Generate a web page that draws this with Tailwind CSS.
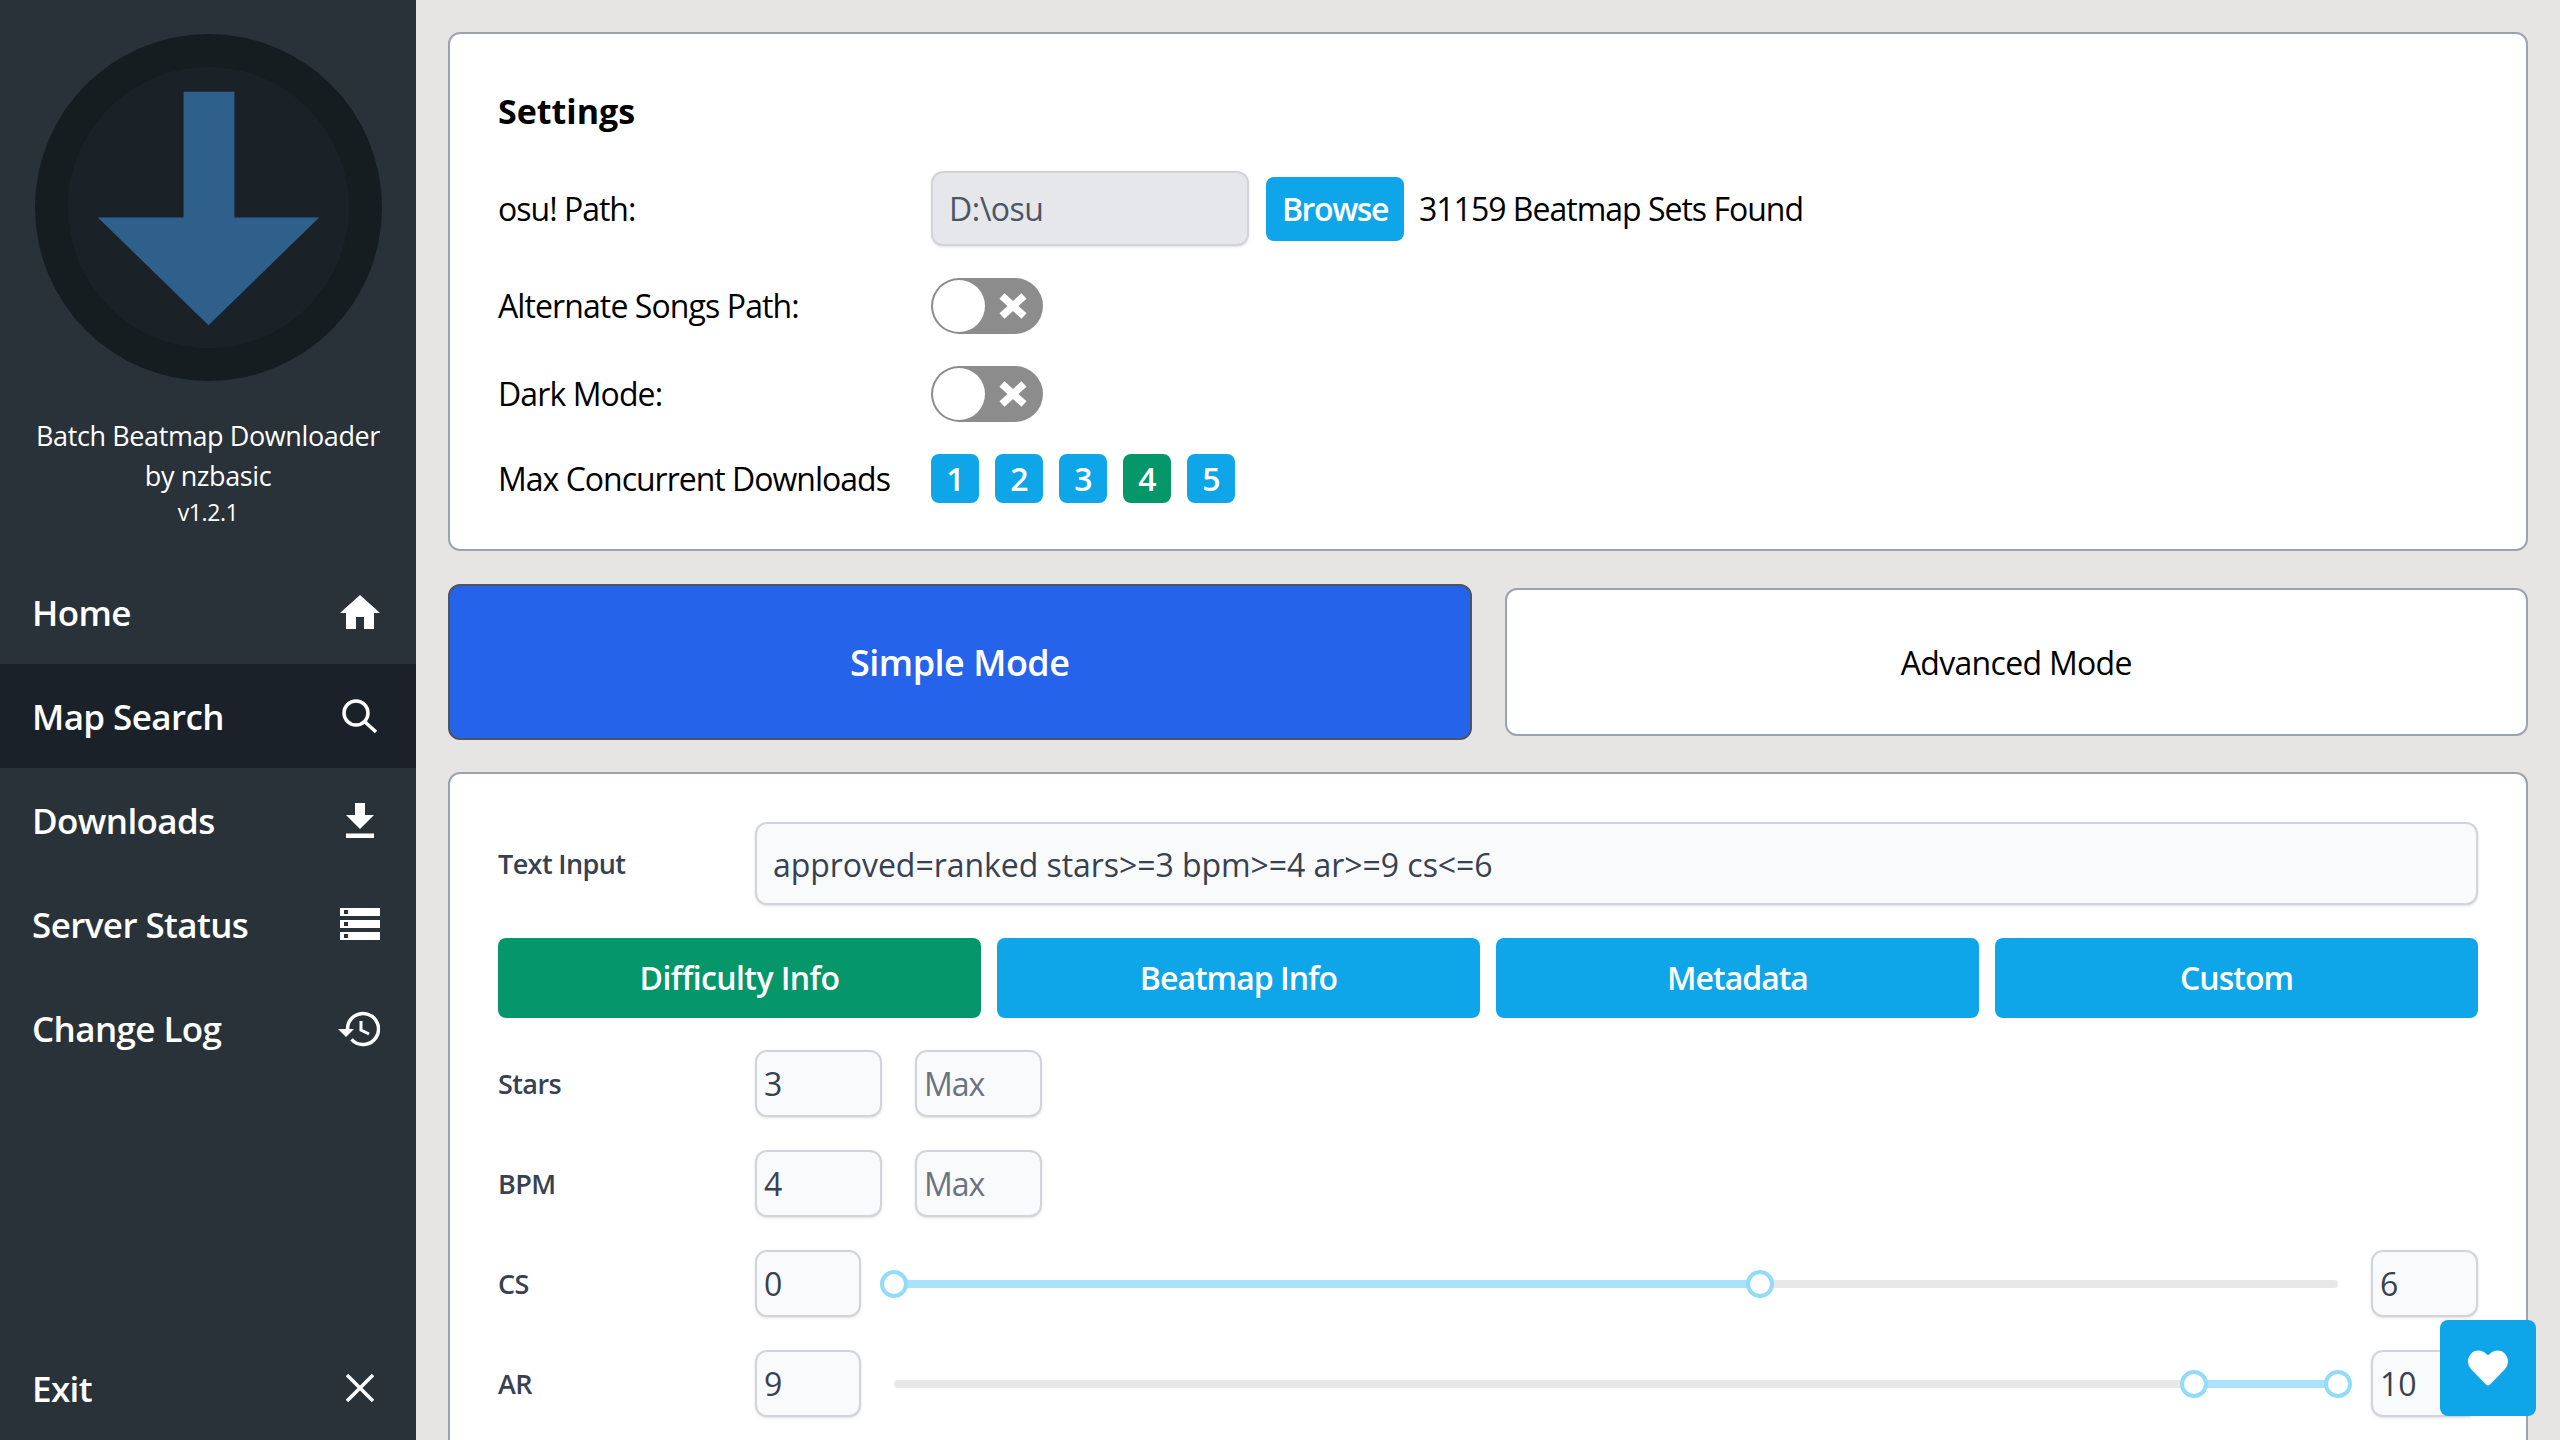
<!DOCTYPE html>
<html lang="en">
<head>
    <meta charset="UTF-8">
    <title>Batch Beatmap Downloader</title>
    <script src="https://cdn.jsdelivr.net/npm/@tailwindcss/browser@4"></script>
</head>
<body class="bg-stone-200 font-['Open_Sans',sans-serif] text-black">
    <div class="relative flex h-[1440px] w-[2560px] overflow-hidden">
        <!-- sidebar -->
        <aside class="flex w-[416px] shrink-0 flex-col bg-[#283238] text-white">
            <svg class="mt-[34px] ml-[35px] h-[347px] w-[347px]" viewBox="0 0 348 348">
                <circle cx="174" cy="174" r="174" fill="#151d20"></circle>
                <circle cx="174" cy="174" r="141" fill="#1a2228"></circle>
                <polygon points="149,58 200,58 200,184 285,184 174,292 63,184 149,184" fill="#2f5f8b"></polygon>
            </svg>
            <div class="mt-[35px] text-center text-[27px] leading-[40px] tracking-[-0.4px]">
                <p>Batch Beatmap Downloader</p>
                <p>by nzbasic</p>
                <p class="text-[23px] leading-[32px]">v1.2.1</p>
            </div>
            <nav class="mt-[32px] flex flex-col text-[35px] font-semibold tracking-[-0.6px]">
                <div class="flex h-[104px] items-center justify-between pr-[36px] pl-[32px]">
                    <span class="pt-[3px]">Home</span>
                    <svg class="h-[34px] w-[40px]" viewBox="0 0 40 34" fill="#fff"><path d="M20 0 40 18H34V34H24V22H16V34H6V18H0Z"></path></svg>
                </div>
                <div class="flex h-[104px] items-center justify-between bg-[#1a2128] pr-[36px] pl-[32px]">
                    <span class="pt-[3px]">Map Search</span>
                    <svg class="mr-[3px] h-[35px] w-[35px]" viewBox="0 0 35 35" fill="none" stroke="#fff" stroke-width="3.5"><circle cx="14" cy="14" r="12"></circle><path d="M23 23 34 33"></path></svg>
                </div>
                <div class="flex h-[104px] items-center justify-between pr-[42px] pl-[32px]">
                    <span class="pt-[3px]">Downloads</span>
                    <svg class="h-[35px] w-[28px]" viewBox="0 0 28 35" fill="#fff"><path d="M9 0H19V12H28L14 26 0 12H9Z"></path><rect y="30.5" width="28" height="4.5"></rect></svg>
                </div>
                <div class="flex h-[104px] items-center justify-between pr-[36px] pl-[32px]">
                    <span class="pt-[3px]">Server Status</span>
                    <svg class="h-[32px] w-[40px]" viewBox="0 0 40 32" fill="#fff">
                        <path fill-rule="evenodd" d="M0 0H40V8H0ZM4 2V6H8V2Z"></path>
                        <path fill-rule="evenodd" d="M0 12H40V20H0ZM4 14V18H8V14Z"></path>
                        <path fill-rule="evenodd" d="M0 24H40V32H0ZM4 26V30H8V26Z"></path>
                    </svg>
                </div>
                <div class="flex h-[104px] items-center justify-between pr-[36px] pl-[32px]">
                    <span class="pt-[3px]">Change Log</span>
                    <svg class="h-[37px] w-[42px]" viewBox="0 0 42 37" fill="none" stroke="#fff" stroke-width="3.5">
                        <path d="M9.5 19A15.5 15.5 0 1 1 13.5 29.4"></path>
                        <polygon points="0,19 16,19 8,27" fill="#fff" stroke="none"></polygon>
                        <path d="M23 11V20L31 24" stroke-width="3"></path>
                    </svg>
                </div>
            </nav>
            <div class="mt-auto flex h-[104px] items-center justify-between pr-[42px] pl-[32px] text-[35px] font-semibold tracking-[-0.6px]">
                <span class="pt-[3px]">Exit</span>
                <svg class="h-[28px] w-[28px]" viewBox="0 0 28 28" stroke="#fff" stroke-width="3.5"><path d="M1 1 27 27M27 1 1 27"></path></svg>
            </div>
        </aside>

        <!-- main column -->
        <main class="flex w-[2144px] flex-col pt-[32px] pr-[32px] pl-[32px]">
            <section class="rounded-xl border-2 border-[#9ca3af] bg-white pt-[53px] pr-[48px] pb-[46px] pl-[48px]">
                <h2 class="h-[48px] text-[34px] leading-[48px] font-bold">Settings</h2>
                <div class="mt-[36px] flex h-[75px] items-center text-[32px] tracking-[-1px]">
                    <label class="w-[433px]">osu! Path:</label>
                    <input type="text" disabled value="D:\osu" class="h-[75px] w-[318px] rounded-xl border-2 border-[#d1d5db] bg-[#e5e7eb] px-[16px] tracking-[-0.5px] text-[#4b5563] shadow-sm">
                    <button class="ml-[17px] h-[64px] w-[138px] rounded-lg bg-[#0ea5e9] font-semibold tracking-[-1.4px] text-white">Browse</button>
                    <span class="ml-[15px]">31159 Beatmap Sets Found</span>
                </div>
                <div class="mt-[32px] flex h-[56px] items-center text-[32px] tracking-[-0.9px]">
                    <label class="w-[433px]">Alternate Songs Path:</label>
                    <div class="relative h-[56px] w-[112px] rounded-full bg-[#8c8c8c]">
                        <div class="absolute top-[2px] left-[2px] h-[52px] w-[52px] rounded-full bg-white"></div>
                        <svg class="absolute top-[14px] left-[68px] h-[28px] w-[28px]" viewBox="0 0 28 28" stroke="#fff" stroke-width="7.5"><path d="M3 4 25 24M25 4 3 24"></path></svg>
                    </div>
                </div>
                <div class="mt-[32px] flex h-[56px] items-center text-[32px] tracking-[-0.9px]">
                    <label class="w-[433px]">Dark Mode:</label>
                    <div class="relative h-[56px] w-[112px] rounded-full bg-[#8c8c8c]">
                        <div class="absolute top-[2px] left-[2px] h-[52px] w-[52px] rounded-full bg-white"></div>
                        <svg class="absolute top-[14px] left-[68px] h-[28px] w-[28px]" viewBox="0 0 28 28" stroke="#fff" stroke-width="7.5"><path d="M3 4 25 24M25 4 3 24"></path></svg>
                    </div>
                </div>
                <div class="mt-[32px] flex h-[49px] items-center text-[32px] tracking-[-1px]">
                    <label class="w-[433px]">Max Concurrent Downloads</label>
                    <div class="flex gap-[16px] font-semibold text-white">
                        <button class="h-[49px] w-[48px] rounded-lg bg-[#0ea5e9]">1</button>
                        <button class="h-[49px] w-[48px] rounded-lg bg-[#0ea5e9]">2</button>
                        <button class="h-[49px] w-[48px] rounded-lg bg-[#0ea5e9]">3</button>
                        <button class="h-[49px] w-[48px] rounded-lg bg-[#059669]">4</button>
                        <button class="h-[49px] w-[48px] rounded-lg bg-[#0ea5e9]">5</button>
                    </div>
                </div>
            </section>

            <div class="mt-[33px] flex h-[156px] items-center gap-[33px]">
                <button class="h-[156px] flex-1 rounded-xl border-2 border-[#4b5563] bg-[#2563eb] pt-[2px] text-[36px] font-semibold tracking-[-0.5px] text-white">Simple Mode</button>
                <button class="h-[148px] flex-1 rounded-xl border-2 border-[#9ca3af] bg-white pt-[2px] text-[32px] tracking-[-0.7px]">Advanced Mode</button>
            </div>

            <section class="mt-[32px] rounded-xl border-2 border-[#9ca3af] bg-white px-[48px] pt-[48px] pb-[48px]">
                <div class="flex h-[83px] items-center">
                    <label class="w-[257px] pt-[2px] text-[27px] font-semibold tracking-[-0.6px] text-[#374151]">Text Input</label>
                    <input type="text" value="approved=ranked stars&gt;=3 bpm&gt;=4 ar&gt;=9 cs&lt;=6" class="h-[83px] flex-1 rounded-xl border-2 border-[#d1d5db] bg-[#f9fafb] px-[16px] pt-[2px] text-[32px] tracking-[-0.05px] text-[#374151] shadow-sm">
                </div>
                <div class="mt-[33px] grid grid-cols-4 gap-[16px] text-[32px] font-semibold tracking-[-1px] text-white">
                    <button class="h-[80px] rounded-lg bg-[#059669] tracking-[-0.6px]">Difficulty Info</button>
                    <button class="h-[80px] rounded-lg bg-[#0ea5e9]">Beatmap Info</button>
                    <button class="h-[80px] rounded-lg bg-[#0ea5e9]">Metadata</button>
                    <button class="h-[80px] rounded-lg bg-[#0ea5e9]">Custom</button>
                </div>
                <div class="mt-[32px] flex h-[67px] items-center">
                    <label class="w-[257px] pt-[2px] text-[27px] font-semibold tracking-[-0.6px] text-[#374151]">Stars</label>
                    <input type="text" value="3" class="h-[67px] w-[127px] rounded-xl border-2 border-[#d1d5db] bg-[#f9fafb] px-[7px] text-[32px] text-[#374151] shadow-sm">
                    <input type="text" placeholder="Max" class="ml-[33px] h-[67px] w-[127px] rounded-xl border-2 border-[#d1d5db] bg-[#f9fafb] px-[7px] text-[32px] tracking-[-1px] shadow-sm placeholder:text-[#6b7280]">
                </div>
                <div class="mt-[33px] flex h-[67px] items-center">
                    <label class="w-[257px] pt-[2px] text-[27px] font-semibold tracking-[-0.6px] text-[#374151]">BPM</label>
                    <input type="text" value="4" class="h-[67px] w-[127px] rounded-xl border-2 border-[#d1d5db] bg-[#f9fafb] px-[7px] text-[32px] text-[#374151] shadow-sm">
                    <input type="text" placeholder="Max" class="ml-[33px] h-[67px] w-[127px] rounded-xl border-2 border-[#d1d5db] bg-[#f9fafb] px-[7px] text-[32px] tracking-[-1px] shadow-sm placeholder:text-[#6b7280]">
                </div>
                <div class="mt-[33px] flex h-[67px] items-center">
                    <label class="w-[257px] pt-[2px] text-[27px] font-semibold tracking-[-0.6px] text-[#374151]">CS</label>
                    <input type="text" value="0" class="h-[67px] w-[106px] rounded-xl border-2 border-[#d1d5db] bg-[#f9fafb] px-[7px] text-[32px] text-[#374151] shadow-sm">
                    <div class="relative mx-[33px] h-[8px] flex-1 rounded-full bg-[#e8e8e8]">
                        <div class="absolute inset-y-0 left-0 w-[60%] bg-[#aae2fb]"></div>
                        <div class="absolute top-[-10px] left-[-14px] h-[28px] w-[28px] rounded-full border-[4px] border-[#93dcf9] bg-white"></div>
                        <div class="absolute top-[-10px] left-[calc(60%-14px)] h-[28px] w-[28px] rounded-full border-[4px] border-[#93dcf9] bg-white"></div>
                    </div>
                    <input type="text" value="6" class="h-[67px] w-[107px] rounded-xl border-2 border-[#d1d5db] bg-[#f9fafb] px-[7px] text-[32px] text-[#374151] shadow-sm">
                </div>
                <div class="mt-[33px] flex h-[67px] items-center">
                    <label class="w-[257px] pt-[2px] text-[27px] font-semibold tracking-[-0.6px] text-[#374151]">AR</label>
                    <input type="text" value="9" class="h-[67px] w-[106px] rounded-xl border-2 border-[#d1d5db] bg-[#f9fafb] px-[7px] text-[32px] text-[#374151] shadow-sm">
                    <div class="relative mx-[33px] h-[8px] flex-1 rounded-full bg-[#e8e8e8]">
                        <div class="absolute inset-y-0 left-[90%] w-[10%] bg-[#aae2fb]"></div>
                        <div class="absolute top-[-10px] left-[calc(90%-14px)] h-[28px] w-[28px] rounded-full border-[4px] border-[#93dcf9] bg-white"></div>
                        <div class="absolute top-[-10px] left-[calc(100%-14px)] h-[28px] w-[28px] rounded-full border-[4px] border-[#93dcf9] bg-white"></div>
                    </div>
                    <input type="text" value="10" class="h-[67px] w-[107px] rounded-xl border-2 border-[#d1d5db] bg-[#f9fafb] px-[7px] text-[32px] text-[#374151] shadow-sm">
                </div>
            </section>
        </main>

        <!-- floating support button -->
        <button class="absolute right-[24px] bottom-[24px] flex h-[96px] w-[96px] items-center justify-center rounded-lg bg-[#0ea5e9]">
            <svg class="h-[40px] w-[40px]" viewBox="0 0 512 512" fill="#fff"><path d="M462.3 62.6C407.5 15.9 326 24.3 275.7 76.2L256 96.5l-19.7-20.3C186.1 24.3 104.5 15.9 49.7 62.6c-62.8 53.6-66.1 149.8-9.9 207.9l193.5 199.8c12.5 12.9 32.8 12.9 45.3 0l193.5-199.8c56.3-58.1 53-154.3-9.8-207.9z"></path></svg>
        </button>
    </div>
</body>
</html>
